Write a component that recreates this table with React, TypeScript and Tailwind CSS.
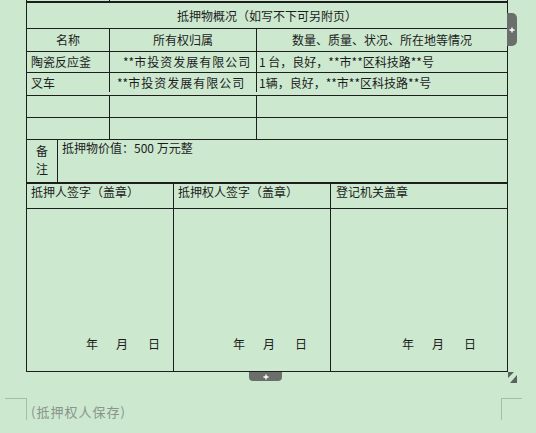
import React from "react";

const Plus = ({ size = 7 }: { size?: number }) => (
  <svg width={size} height={size} viewBox="0 0 7 7" className="block">
    <path d="M3.5 0.5v6M0.5 3.5h6" stroke="#ffffff" strokeWidth="1.6" />
  </svg>
);

const Company = () => (
  <span className="whitespace-nowrap">
    **<span className="tracking-[1px]">市投资发展有限公司</span>
  </span>
);

const DateLine = ({ pr }: { pr: string }) => (
  <div className={`flex h-full items-end pb-[19px] leading-[16px] justify-end ${pr}`}>
    <span>年</span>
    <span className="ml-[18px]">月</span>
    <span className="ml-[20px]">日</span>
  </div>
);

export default function App() {
  return (
    <div className="relative h-[433px] w-[536px] overflow-hidden bg-[#cce8cf] font-['Noto_Sans_CJK_SC','Noto_Sans',sans-serif] text-[12px] text-[#1c1c1c]">
      {/* table */}
      <div className="ml-[26px] w-[482px] border-x border-[#1e1e1e]">
        {/* tail of previous table */}
        <div className="flex h-[3px] border-b-2 border-[#1e1e1e]">
          <div className="w-[83px] border-r border-[#1e1e1e]" />
        </div>

        <div className="flex h-[26px] items-center justify-center border-b border-[#1e1e1e] leading-[16px]">
          抵押物概况（如写不下可另附页）
        </div>

        <div className="flex h-[23px] border-b border-[#1e1e1e] leading-[16px]">
          <div className="flex w-[83px] items-center justify-center border-r border-[#1e1e1e]">名称</div>
          <div className="flex w-[147px] items-center justify-center border-r border-[#1e1e1e]">所有权归属</div>
          <div className="flex flex-1 items-center justify-center">数量、质量、状况、所在地等情况</div>
        </div>

        <div className="flex h-[21px] border-b border-[#1e1e1e] leading-[16px]">
          <div className="flex w-[83px] items-center border-r border-[#1e1e1e] pl-[4px]">陶瓷反应釜</div>
          <div className="flex w-[147px] items-center overflow-hidden border-r border-[#1e1e1e] pl-[13px]">
            <Company />
          </div>
          <div className="flex flex-1 items-center pl-[2px]">1 台，良好，**市**区科技路**号</div>
        </div>

        <div className="flex h-[23px] border-b border-[#1e1e1e] pb-[3px] leading-[16px]">
          <div className="flex w-[83px] items-center border-r border-[#1e1e1e] pl-[4px]">叉车</div>
          <div className="flex w-[147px] items-center overflow-hidden border-r border-[#1e1e1e] pl-[7px]">
            <Company />
          </div>
          <div className="flex flex-1 items-center pl-[2px]">1辆，良好，**市**区科技路**号</div>
        </div>

        <div className="flex h-[22px] border-b border-[#1e1e1e]">
          <div className="w-[83px] border-r border-[#1e1e1e]" />
          <div className="w-[147px] border-r border-[#1e1e1e]" />
          <div className="flex-1" />
        </div>

        <div className="flex h-[22px] border-b border-[#1e1e1e]">
          <div className="w-[83px] border-r border-[#1e1e1e]" />
          <div className="w-[147px] border-r border-[#1e1e1e]" />
          <div className="flex-1" />
        </div>

        {/* remarks */}
        <div className="flex h-[44px] border-b-2 border-[#1e1e1e]">
          <div className="flex w-[31px] flex-col items-center border-r border-[#1e1e1e] pt-[2px] leading-[18px]">
            <span>备</span>
            <span>注</span>
          </div>
          <div className="flex-1 pl-[4px] leading-[16px]">抵押物价值：500 万元整</div>
        </div>

        {/* signatures */}
        <div className="flex h-[25px] border-b border-[#1e1e1e] leading-[16px]">
          <div className="w-[147px] border-r border-[#1e1e1e] pl-[4px]">抵押人签字（盖章）</div>
          <div className="w-[157px] border-r border-[#1e1e1e] pl-[4px]">抵押权人签字（盖章）</div>
          <div className="flex-1 pl-[5px]">登记机关盖章</div>
        </div>

        <div className="flex h-[163px] border-b border-[#1e1e1e]">
          <div className="w-[147px] border-r border-[#1e1e1e]">
            <DateLine pr="pr-[13px]" />
          </div>
          <div className="w-[157px] border-r border-[#1e1e1e]">
            <DateLine pr="pr-[23px]" />
          </div>
          <div className="flex-1">
            <DateLine pr="pr-[31px]" />
          </div>
        </div>
      </div>

      {/* page footer with crop marks */}
      <div className="mt-[26px] flex justify-between">
        <div className="flex">
          <div className="ml-[5px] h-[22px] w-[22px] border-r border-t border-[#a9bca9]" />
          <span className="ml-[4px] mt-[6px] text-[13px] leading-[16px] tracking-[1px] text-[#8a948a]">(抵押权人保存)</span>
        </div>
        <div className="mr-[14px] h-[22px] w-[21px] border-l border-t border-[#a9bca9]" />
      </div>

      {/* insert-column tab */}
      <div className="absolute left-[507px] top-[13px] flex h-[33px] w-[10px] items-center justify-center rounded-r-[5px] bg-[#6b6f6b]">
        <Plus size={6} />
      </div>

      {/* insert-row tab */}
      <div className="absolute left-[249px] top-[372px] flex h-[9px] w-[33px] items-center justify-center rounded-b-[4px] bg-[#6b6f6b]">
        <Plus size={6} />
      </div>

      {/* resize handle */}
      <svg className="absolute left-[508px] top-[372px]" width="10" height="11" viewBox="0 0 10 11">
        <polygon points="0,0 6,0 0,6" fill="#5d615d" />
        <polygon points="9,3 9,11 2,11" fill="#5d615d" />
      </svg>
    </div>
  );
}
